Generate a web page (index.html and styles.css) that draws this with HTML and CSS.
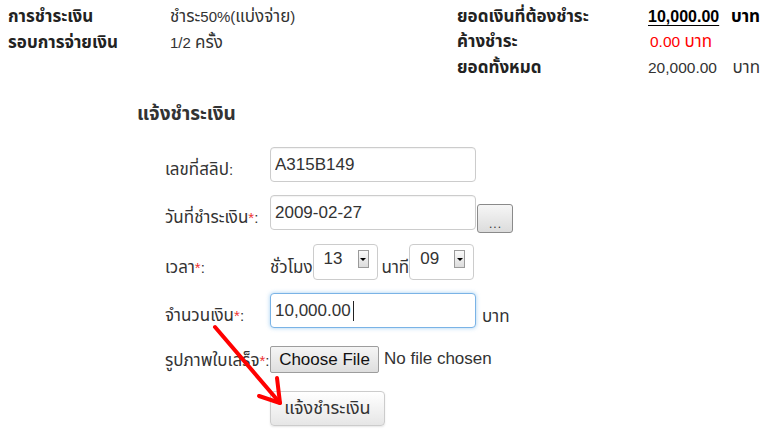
FILE: index.html
```html
<!DOCTYPE html>
<html lang="th">
<head>
<meta charset="utf-8">
<link rel="stylesheet" href="styles.css">
</head>
<body>
<div class="page">
  <div class="summary">
    <div class="sum-left">
      <div class="k">การชำระเงิน</div><div class="v">ชำระ<span class="n">50%(</span>แบ่งจ่าย<span class="n">)</span></div>
      <div class="k">รอบการจ่ายเงิน</div><div class="v"><span class="n">1/2 </span>ครั้ง</div>
    </div>
    <div class="sum-right">
      <div class="rk">ยอดเงินที่ต้องชำระ</div><div class="rv due"><span class="n">10,000.00</span></div><div class="ru bold">บาท</div>
      <div class="rk">ค้างชำระ</div><div class="rv red"><span class="n">0.00 </span>บาท</div><div class="ru"></div>
      <div class="rk">ยอดทั้งหมด</div><div class="rv"><span class="n">20,000.00</span></div><div class="ru">บาท</div>
    </div>
  </div>

  <h2 class="title">แจ้งชำระเงิน</h2>

  <div class="form">
    <div class="lbl">เลขที่สลิป<span class="n">:</span></div>
    <div class="ctl"><input class="field" type="text" value="A315B149"></div>

    <div class="lbl">วันที่ชำระเงิน<span class="req">*</span><span class="n">:</span></div>
    <div class="ctl"><input class="field" type="text" value="2009-02-27"><button class="dots">...</button></div>

    <div class="lbl">เวลา<span class="req">*</span><span class="n">:</span></div>
    <div class="ctl">
      <span class="unit-l">ชั่วโมง</span>
      <div class="sel"><span class="sel-v">13</span><span class="sel-btn"><span class="tri"></span></span></div>
      <span class="unit-m">นาที</span>
      <div class="sel"><span class="sel-v">09</span><span class="sel-btn"><span class="tri"></span></span></div>
    </div>

    <div class="lbl">จำนวนเงิน<span class="req">*</span><span class="n">:</span></div>
    <div class="ctl">
      <div class="focus-wrap"><input class="field focused" type="text" value="10,000.00"><span class="caret"></span></div>
      <span class="unit-r">บาท</span>
    </div>

    <div class="lbl">รูปภาพใบเสร็จ<span class="req">*</span><span class="n">:</span></div>
    <div class="ctl"><button class="choose">Choose File</button><span class="nofile">No file chosen</span></div>

    <div class="lbl"></div>
    <div class="ctl"><button class="submit">แจ้งชำระเงิน</button></div>
  </div>

  <svg class="arrow" width="80" height="90" viewBox="0 0 80 90">
    <g stroke="#ff0000" stroke-width="4" stroke-linecap="round" stroke-linejoin="round" fill="none">
      <line x1="4" y1="4" x2="69" y2="80"/>
      <polyline points="66,55 69,80 48,73"/>
    </g>
  </svg>
</div>
</body>
</html>
```

FILE: styles.css
```css
* { box-sizing: border-box; }
html, body { margin: 0; padding: 0; background: #fff; }
body {
  font-family: "Liberation Sans", Arial, "Noto Sans Thai", "Noto Sans", sans-serif;
  font-size: 17px;
  color: #333;
}
.n { font-size: 15px; }
.page { position: relative; width: 770px; height: 432px; overflow: hidden; }

.summary { display: flex; height: 82px; padding: 4px 0 0 8px; }
.sum-left {
  display: grid;
  grid-template-columns: 162px auto;
  grid-auto-rows: 26px;
  align-items: center;
  align-content: start;
  width: 449px;
}
.sum-left .k { font-weight: bold; color: #222; }
.sum-left .v { color: #333; }
.sum-right {
  display: grid;
  grid-template-columns: 191px 82px 30px;
  grid-auto-rows: 25.5px;
  align-items: center;
  align-content: start;
}
.rk { font-weight: bold; color: #222; }
.rv { color: #333; }
.rv .n { font-size: 15.5px; }
.rv.due { font-weight: bold; color: #000; text-decoration: underline; text-underline-offset: 3px; }
.rv.due .n { font-size: 16px; }
.rv.red { color: #ff0000; padding-left: 2px; }
.ru { color: #333; text-align: right; white-space: nowrap; }
.ru.bold { font-weight: bold; color: #000; }

.title {
  margin: 19px 0 0 137px;
  font-size: 19px;
  font-weight: bold;
  color: #333;
  height: 26px;
  line-height: 26px;
}

.form {
  display: grid;
  grid-template-columns: 105px auto;
  grid-template-rows: 40px 48px 50px 48px 45px 53px;
  margin: 15px 0 0 165px;
}
.lbl {
  display: flex;
  align-items: flex-end;
  padding-bottom: 1px;
  line-height: 22px;
  color: #333;
  white-space: nowrap;
}
.req { color: #e33; font-size: 15px; }
.ctl { display: flex; align-items: flex-end; }

.field {
  width: 206px;
  height: 35px;
  border: 1px solid #ccc;
  border-radius: 4px;
  padding: 0 4px;
  font-family: "Liberation Sans", Arial, sans-serif;
  font-size: 17px;
  color: #333;
  background: #fff;
  outline: none;
  box-shadow: inset 0 1px 1px rgba(0,0,0,0.05);
}
.focused {
  border-color: #7ab3e6;
  box-shadow: 0 0 4px rgba(102,175,233,0.6);
}
.focus-wrap { position: relative; }
.caret {
  position: absolute;
  left: 83px;
  top: 8px;
  width: 1px;
  height: 20px;
  background: #222;
}
.dots {
  width: 36px;
  height: 29px;
  margin-left: 1px;
  margin-bottom: -3px;
  border: 1px solid #8a8a8a;
  border-radius: 3px;
  background: linear-gradient(#f6f6f6, #dcdcdc);
  font-family: "Liberation Sans", Arial, sans-serif;
  font-size: 12px;
  letter-spacing: 1px;
  color: #333;
  padding: 10px 0 0 1px;
}

.unit-l, .unit-m { line-height: 22px; padding-bottom: 1px; color: #333; }
.unit-m { margin: 0 0 0 4px; }
.sel {
  display: flex;
  align-items: flex-start;
  justify-content: space-between;
  width: 65px;
  height: 36px;
  border: 1px solid #ccc;
  border-radius: 4px;
  padding: 4px 8px 0 10px;
  background: #fff;
}
.sel-v { font-size: 17px; line-height: 20px; color: #333; }
.sel-btn {
  width: 11px;
  height: 18px;
  margin-top: 1px;
  border: 1px solid #9a9a9a;
  background: linear-gradient(#fafafa, #dcdcdc);
  display: flex;
  align-items: center;
  justify-content: center;
}
.tri {
  width: 0; height: 0;
  border-left: 3px solid transparent;
  border-right: 3px solid transparent;
  border-top: 3px solid #000;
}
.unit-r { margin-left: 6px; line-height: 22px; padding-bottom: 0; color: #333; }

.choose {
  height: 27px;
  width: 109px;
  border: 1px solid #9d9d9d;
  border-radius: 2px;
  background: linear-gradient(#f5f5f5, #dedede);
  font-family: "Liberation Sans", Arial, sans-serif;
  font-size: 17px;
  color: #111;
  padding: 0;
}
.nofile {
  margin-left: 5px;
  font-family: "Liberation Sans", Arial, sans-serif;
  font-size: 17px;
  line-height: 22px;
  color: #333;
  padding-bottom: 3px;
}

.submit {
  width: 115px;
  height: 35px;
  border: 1px solid #ccc;
  border-radius: 4px;
  background: linear-gradient(#ffffff, #e6e6e6);
  font-family: "Liberation Sans", Arial, "Noto Sans Thai", sans-serif;
  font-size: 18px;
  color: #333;
  padding: 0;
  box-shadow: 0 1px 2px rgba(0,0,0,0.1);
}

.arrow { position: absolute; left: 211px; top: 323px; }
```
